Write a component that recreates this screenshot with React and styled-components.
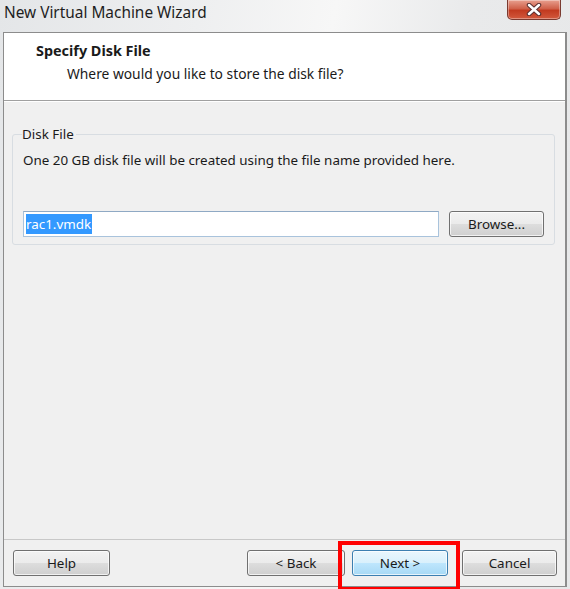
import React from 'react';
import styled, { createGlobalStyle } from 'styled-components';

const GlobalStyle = createGlobalStyle`
  html, body {
    margin: 0;
    padding: 0;
  }
  body {
    font-family: 'Noto Sans', 'Open Sans', sans-serif;
    color: #1a1a1a;
  }
`;

const Window = styled.div`
  width: 570px;
  height: 589px;
  display: flex;
  flex-direction: column;
  box-sizing: border-box;
  background: linear-gradient(100deg, #e4e6e8 0%, #eeeff0 30%, #f7f7f7 50%, #e9eaeb 70%, #e6e7e8 100%);
  position: relative;
  overflow: hidden;
`;

const TitleBar = styled.div`
  height: 32px;
  display: flex;
  align-items: flex-start;
  justify-content: space-between;
  padding-left: 4px;
  padding-right: 9px;
`;

const TitleText = styled.div`
  font-size: 15.4px;
  line-height: 16px;
  margin-top: 5px;
  color: #1e1e1e;
`;

const CloseButton = styled.div`
  width: 54px;
  height: 20px;
  box-sizing: border-box;
  border: 1px solid #7a3a30;
  border-top: none;
  border-radius: 0 0 5px 5px;
  background: linear-gradient(#e8a08f 0%, #d0614a 45%, #c23a20 55%, #d2593d 100%);
  display: flex;
  align-items: center;
  justify-content: center;
  box-shadow: inset 0 0 0 1px rgba(255, 255, 255, 0.35);
`;

const Frame = styled.div`
  flex: 1;
  margin: 0 3px 2px 3px;
  border: 1px solid #8c8c8c;
  border-right-width: 2px;
  display: flex;
  flex-direction: column;
  background: #f0f0f0;
`;

const Header = styled.div`
  height: 68px;
  box-sizing: border-box;
  background: #ffffff;
  border-bottom: 1px solid #a0a0a0;
  padding: 8px 0 0 32px;
`;

const HeaderTitle = styled.div`
  font-weight: bold;
  font-size: 14.4px;
  line-height: 19px;
`;

const HeaderSub = styled.div`
  font-size: 13.8px;
  line-height: 18px;
  margin-top: 5px;
  padding-left: 31px;
`;

const Body = styled.div`
  flex: 1;
  border-top: 1px solid #ffffff;
  padding: 23px 10px 0 8px;
`;

const GroupBox = styled.fieldset`
  margin: 0;
  padding: 0 10px 7px 10px;
  border: 1px solid #d8dde2;
  border-radius: 3px;
  height: 120px;
  box-sizing: border-box;
`;

const Legend = styled.legend`
  font-size: 13.4px;
  padding: 0 2px 0 0;
  margin-left: -1px;
  line-height: 18px;
`;

const Description = styled.div`
  font-size: 13.4px;
  line-height: 18px;
  margin-top: 8px;
`;

const FileRow = styled.div`
  display: flex;
  align-items: center;
  gap: 10px;
  margin-top: 42px;
`;

const TextBox = styled.div`
  flex: 1;
  height: 26px;
  box-sizing: border-box;
  border: 1px solid #a9c3dc;
  border-top-color: #8fa9c4;
  background: #ffffff;
  display: flex;
  align-items: center;
  padding-left: 2px;
`;

const Selected = styled.span`
  background: #3399ff;
  color: #ffffff;
  font-size: 13.4px;
  line-height: 20px;
  padding-right: 1px;
`;

const Button = styled.div`
  width: ${p => p.$w || 97}px;
  height: 26px;
  box-sizing: border-box;
  border: 1px solid ${p => (p.$default ? '#3c7fb1' : '#707070')};
  border-radius: 3px;
  background: ${p =>
    p.$default
      ? 'linear-gradient(#eaf6fd 0%, #d9f0fc 50%, #bee6fd 51%, #a7d9f5 100%)'
      : 'linear-gradient(#f2f2f2 0%, #ebebeb 50%, #dddddd 51%, #cfcfcf 100%)'};
  box-shadow: inset 0 0 0 1px rgba(255, 255, 255, 0.7);
  display: flex;
  align-items: center;
  justify-content: center;
  font-size: 13.4px;
  color: #1a1a1a;
`;

const Footer = styled.div`
  height: 47px;
  box-sizing: border-box;
  border-top: 1px solid #c8c8c8;
  display: flex;
  align-items: flex-start;
  padding: 10px 8px 0 9px;
`;

const Spacer = styled.div`
  flex: 1;
`;

const NextSlot = styled.div`
  position: relative;
  margin: 0 14px 0 7px;
`;

const Highlight = styled.div`
  position: absolute;
  left: -14px;
  top: -9px;
  width: 122px;
  height: 50px;
  box-sizing: border-box;
  border: 4px solid #ff0000;
  pointer-events: none;
`;

const App = () => {
  return (
    <Window>
      <GlobalStyle />
      <TitleBar>
        <TitleText>New Virtual Machine Wizard</TitleText>
        <CloseButton>
          <svg width="16" height="13" viewBox="0 0 16 13">
            <path d="M3 2 L13 11 M13 2 L3 11" stroke="#5a3030" strokeWidth="4.5" strokeLinecap="round" />
            <path d="M3 2 L13 11 M13 2 L3 11" stroke="#ffffff" strokeWidth="2.5" strokeLinecap="round" />
          </svg>
        </CloseButton>
      </TitleBar>
      <Frame>
        <Header>
          <HeaderTitle>Specify Disk File</HeaderTitle>
          <HeaderSub>Where would you like to store the disk file?</HeaderSub>
        </Header>
        <Body>
          <GroupBox>
            <Legend>Disk File</Legend>
            <Description>One 20 GB disk file will be created using the file name provided here.</Description>
            <FileRow>
              <TextBox>
                <Selected>rac1.vmdk</Selected>
              </TextBox>
              <Button $w={95}>Browse...</Button>
            </FileRow>
          </GroupBox>
        </Body>
        <Footer>
          <Button>Help</Button>
          <Spacer />
          <Button $w={98}>&lt; Back</Button>
          <NextSlot>
            <Button $default $w={96}>Next &gt;</Button>
            <Highlight />
          </NextSlot>
          <Button $w={95}>Cancel</Button>
        </Footer>
      </Frame>
    </Window>
  );
};

export default App;
